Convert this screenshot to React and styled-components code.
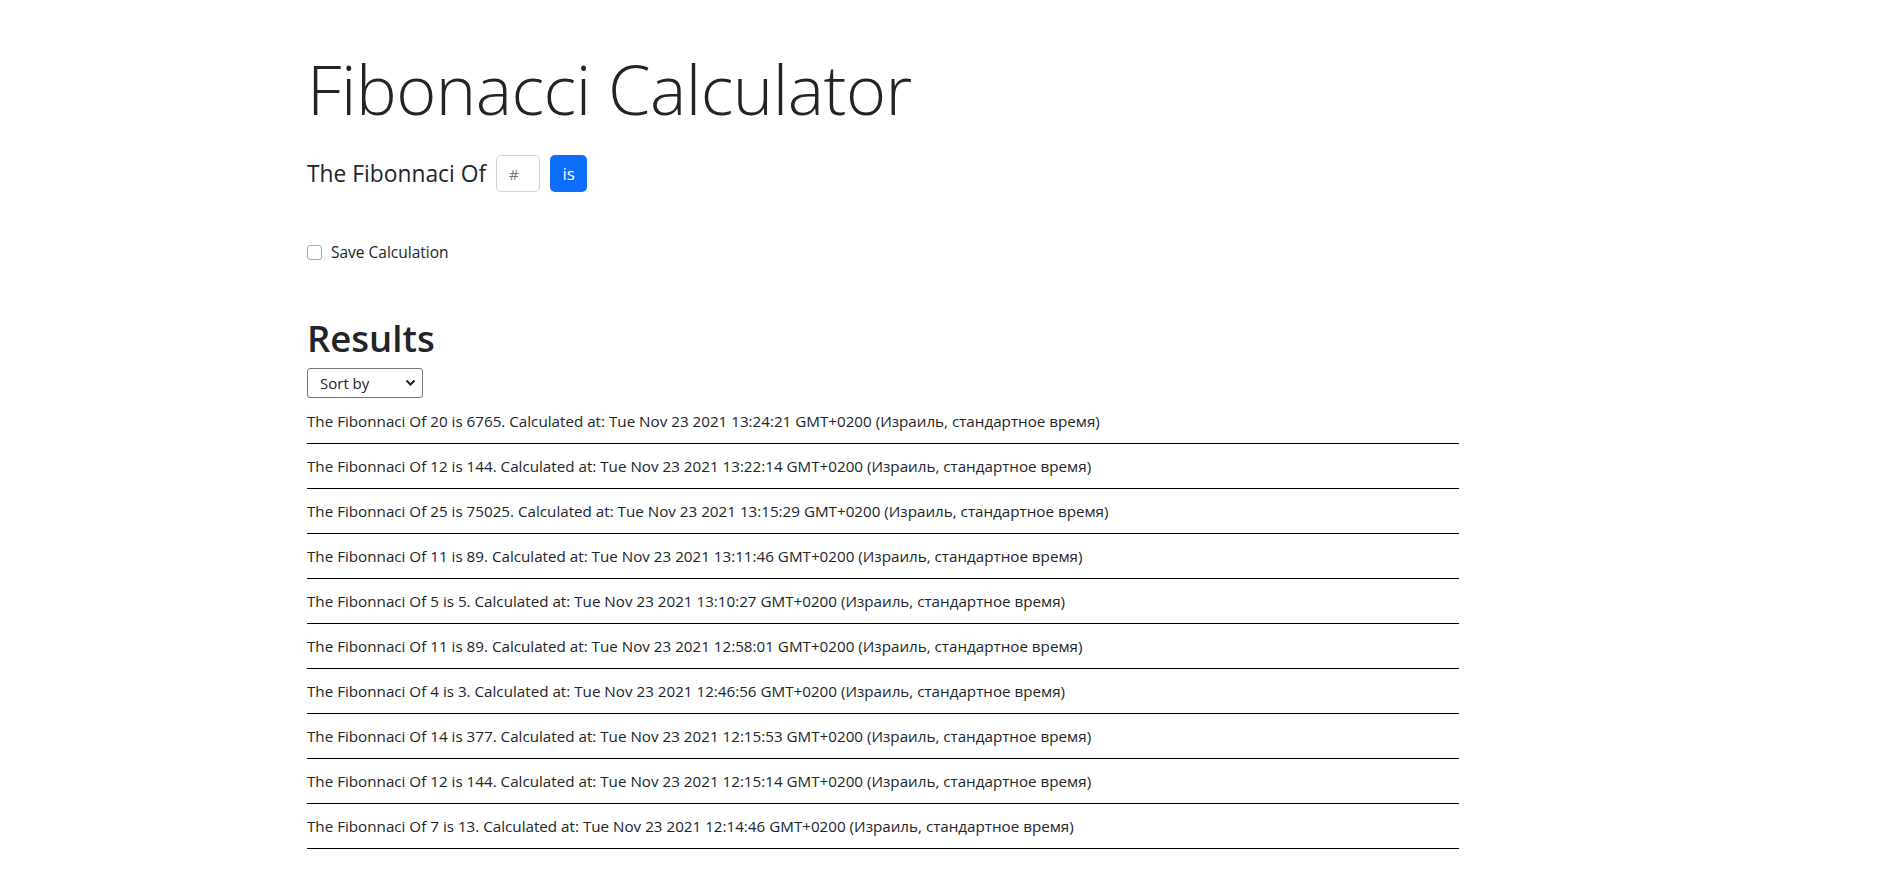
import React from "react";
import styled, { createGlobalStyle } from "styled-components";

const GlobalStyle = createGlobalStyle`
  * { box-sizing: border-box; }
  body {
    margin: 0;
    background: #fff;
    color: #212529;
    font-family: "Open Sans", "Noto Sans", sans-serif;
  }
`;

const results = [
  [20, 6765, "13:24:21"],
  [12, 144, "13:22:14"],
  [25, 75025, "13:15:29"],
  [11, 89, "13:11:46"],
  [5, 5, "13:10:27"],
  [11, 89, "12:58:01"],
  [4, 3, "12:46:56"],
  [14, 377, "12:15:53"],
  [12, 144, "12:15:14"],
  [7, 13, "12:14:46"],
];

const Page = styled.main`
  padding: 47px 0 0 307px;
  width: 1459px;
`;

const Title = styled.h1`
  margin: 0;
  font-size: 68.5px;
  font-weight: 300;
  line-height: 84px;
  letter-spacing: -0.5px;
`;

const FormRow = styled.div`
  display: flex;
  align-items: center;
  gap: 10px;
  margin-top: 24px;
`;

const Lead = styled.label`
  font-size: 22.8px;
`;

const NumberInput = styled.input`
  width: 44px;
  height: 37px;
  border: 1px solid #ced4da;
  border-radius: 5px;
  padding: 0 12px;
  font: inherit;
  font-size: 15px;
  color: #212529;
  &::placeholder {
    color: #6c757d;
  }
`;

const Button = styled.button`
  width: 37px;
  height: 37px;
  border: none;
  border-radius: 5px;
  background: #0d6efd;
  color: #fff;
  font: inherit;
  font-size: 17px;
  padding: 0;
`;

const CheckRow = styled.label`
  display: flex;
  align-items: center;
  gap: 9px;
  margin-top: 49px;
  font-size: 15.5px;
`;

const Checkbox = styled.input`
  appearance: none;
  margin: 0;
  width: 15px;
  height: 15px;
  border: 1px solid #a8a8a8;
  border-radius: 3px;
  background: #fff;
`;

const Heading = styled.h2`
  margin: 52px 0 0;
  font-size: 36.5px;
  font-weight: 600;
  line-height: 46px;
`;

const SelectWrap = styled.div`
  position: relative;
  width: 116px;
  height: 30px;
  margin-top: 7px;
`;

const Select = styled.select`
  appearance: none;
  width: 100%;
  height: 100%;
  border: 1px solid #767676;
  border-radius: 3px;
  background: #fff;
  padding: 0 0 0 12px;
  font: inherit;
  font-size: 15px;
  color: #212529;
`;

const Chevron = styled.svg`
  position: absolute;
  right: 7px;
  top: 11px;
  pointer-events: none;
`;

const List = styled.ul`
  list-style: none;
  margin: 1px 0 0;
  padding: 0;
  width: 1152px;
`;

const Item = styled.li`
  height: 45px;
  border-bottom: 1.3px solid #000;
  padding-top: 10px;
  font-size: 15.2px;
  line-height: 24px;
`;

export default function App() {
  return (
    <>
      <GlobalStyle />
      <Page>
        <Title>Fibonacci Calculator</Title>
        <FormRow>
          <Lead htmlFor="n">The Fibonnaci Of</Lead>
          <NumberInput id="n" placeholder="#" />
          <Button>is</Button>
        </FormRow>
        <CheckRow>
          <Checkbox type="checkbox" />
          Save Calculation
        </CheckRow>
        <Heading>Results</Heading>
        <SelectWrap>
          <Select defaultValue="">
            <option value="">Sort by</option>
            <option value="date">Date</option>
            <option value="number">Number</option>
          </Select>
          <Chevron width="11" height="8" viewBox="0 0 11 8">
            <path d="M1.5 1.5 L5.5 5.5 L9.5 1.5" fill="none" stroke="#222" strokeWidth="2" />
          </Chevron>
        </SelectWrap>
        <List>
          {results.map(([n, v, t], i) => (
            <Item key={i}>
              The Fibonnaci Of {n} is {v}. Calculated at: Tue Nov 23 2021 {t} GMT+0200 (Израиль, стандартное время)
            </Item>
          ))}
        </List>
      </Page>
    </>
  );
}
